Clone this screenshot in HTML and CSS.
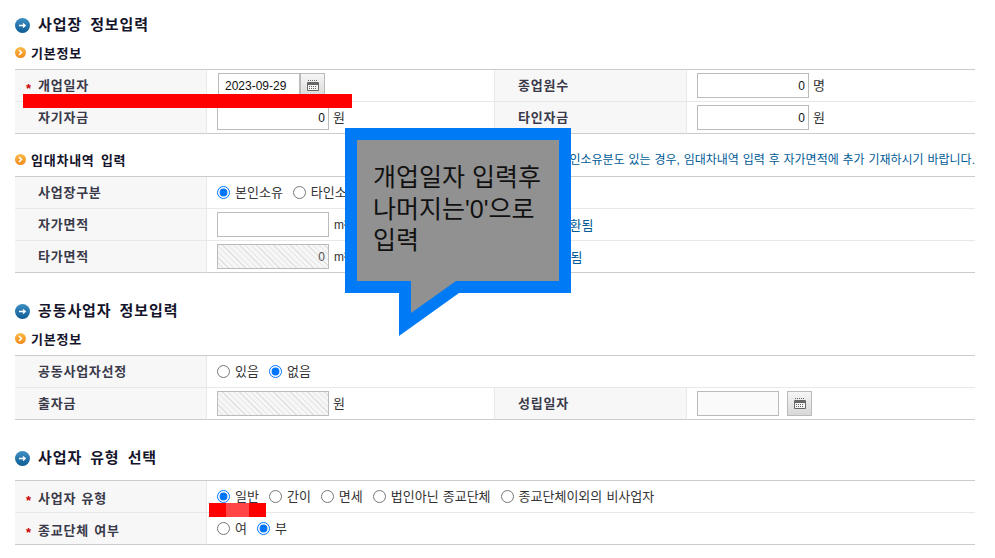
FILE: index.html
```html
<!DOCTYPE html>
<html lang="ko">
<head>
<meta charset="utf-8">
<title>사업장 정보입력</title>
<link rel="stylesheet" href="styles.css">
</head>
<body>
<svg class="defs" width="0" height="0" aria-hidden="true">
  <defs>
    <linearGradient id="gb" x1="0" y1="0" x2="0" y2="1"><stop offset="0" stop-color="#3d8fc4"/><stop offset="1" stop-color="#0f5c95"/></linearGradient>
    <linearGradient id="go" x1="0" y1="0" x2="0" y2="1"><stop offset="0" stop-color="#fdbb4a"/><stop offset="1" stop-color="#f08a1c"/></linearGradient>
    <symbol id="i-title" viewBox="0 0 15 15"><circle cx="7.5" cy="7.5" r="7.5" fill="url(#gb)"/><path d="M4 7.5h6M8 5.5l2.2 2-2.2 2" fill="none" stroke="#fff" stroke-width="1.3"/></symbol>
    <symbol id="i-sub" viewBox="0 0 11 11"><circle cx="5.5" cy="5.5" r="5.5" fill="url(#go)"/><path d="M4 3l2.5 2.5L4 8" fill="none" stroke="#fff" stroke-width="1.5"/></symbol>
    <symbol id="i-cal" viewBox="0 0 12 11"><path d="M1 0.5h10" stroke="#666" stroke-dasharray="1 1" fill="none"/><path d="M0.5 2.5h11v8h-11z" fill="#f4f4f4" stroke="#666"/><path d="M1 3h10v2H1z" fill="#666"/><path d="M2 6.5h8M2 8.5h8" stroke="#666" stroke-dasharray="1 1"/></symbol>
  </defs>
</svg>
<main class="page">
  <h2 class="title"><svg class="ico-title"><use href="#i-title"/></svg>사업장 정보입력</h2>
  <h3 class="sub"><svg class="ico-sub"><use href="#i-sub"/></svg>기본정보</h3>
  <table class="form">
    <colgroup><col class="c1"><col class="c2"><col class="c3"><col class="c4"></colgroup>
    <tr>
      <th><span class="req">*</span>개업일자</th>
      <td><div class="field date"><input class="inp inp-date" type="text" value="2023-09-29"><button class="cal" type="button"><svg class="ico-cal"><use href="#i-cal"/></svg></button></div></td>
      <th class="th2">종업원수</th>
      <td><div class="field"><input class="inp num" type="text" value="0"><span class="unit">명</span></div></td>
    </tr>
    <tr>
      <th>자기자금</th>
      <td><div class="field"><input class="inp num" type="text" value="0"><span class="unit">원</span></div></td>
      <th class="th2">타인자금</th>
      <td><div class="field"><input class="inp num" type="text" value="0"><span class="unit">원</span></div></td>
    </tr>
  </table>

  <div class="sub-row">
    <h3 class="sub"><svg class="ico-sub"><use href="#i-sub"/></svg>임대차내역 입력</h3>
    <p class="notice">타인소유분도 있는 경우, 임대차내역 입력 후 자가면적에 추가 기재하시기 바랍니다.</p>
  </div>
  <table class="form">
    <colgroup><col class="c1"><col class="c2"><col class="c3"><col class="c4"></colgroup>
    <tr>
      <th>사업장구분</th>
      <td colspan="3"><div class="radios">
        <label><input type="radio" name="r1" checked>본인소유</label>
        <label><input type="radio" name="r1">타인소유</label>
      </div></td>
    </tr>
    <tr>
      <th>자가면적</th>
      <td colspan="3"><div class="field"><input class="inp num" type="text"><span class="unit-m">m²</span><span class="hint hint-a">자동 변환됨</span></div></td>
    </tr>
    <tr>
      <th>타가면적</th>
      <td colspan="3"><div class="field"><input class="inp num hatch" type="text" value="0" readonly><span class="unit-m">m²</span><span class="hint hint-b">자동 계산됨</span></div></td>
    </tr>
  </table>

  <h2 class="title t2"><svg class="ico-title"><use href="#i-title"/></svg>공동사업자 정보입력</h2>
  <h3 class="sub"><svg class="ico-sub"><use href="#i-sub"/></svg>기본정보</h3>
  <table class="form">
    <colgroup><col class="c1"><col class="c2"><col class="c3"><col class="c4"></colgroup>
    <tr>
      <th>공동사업자선정</th>
      <td colspan="3"><div class="radios">
        <label><input type="radio" name="r2">있음</label>
        <label><input type="radio" name="r2" checked>없음</label>
      </div></td>
    </tr>
    <tr>
      <th>출자금</th>
      <td><div class="field"><input class="inp num hatch" type="text" readonly><span class="unit">원</span></div></td>
      <th class="th2">성립일자</th>
      <td><div class="field"><input class="inp soft" type="text"><button class="cal cal-sep" type="button"><svg class="ico-cal"><use href="#i-cal"/></svg></button></div></td>
    </tr>
  </table>

  <h2 class="title t3"><svg class="ico-title"><use href="#i-title"/></svg>사업자 유형 선택</h2>
  <table class="form form-low">
    <colgroup><col class="c1"><col class="c2"><col class="c3"><col class="c4"></colgroup>
    <tr>
      <th><span class="req">*</span>사업자 유형</th>
      <td colspan="3"><div class="radios">
        <label><input type="radio" name="r3" checked>일반</label>
        <label><input type="radio" name="r3">간이</label>
        <label><input type="radio" name="r3">면세</label>
        <label><input type="radio" name="r3">법인아닌 종교단체</label>
        <label><input type="radio" name="r3">종교단체이외의 비사업자</label>
      </div></td>
    </tr>
    <tr>
      <th><span class="req">*</span>종교단체 여부</th>
      <td colspan="3"><div class="radios">
        <label><input type="radio" name="r4">여</label>
        <label><input type="radio" name="r4" checked>부</label>
      </div></td>
    </tr>
  </table>
</main>

<div class="redact redact-a"></div>
<div class="redact redact-b"><span class="redact-mid"></span></div>

<aside class="callout">
  <svg class="callout-shape" width="226" height="208" viewBox="0 0 226 208" aria-hidden="true">
    <path d="M0 0H226V165H114L54 208V165H0Z" fill="#007bf5"/>
    <path d="M12 12H214V153H111L66 185V153H12Z" fill="#919191"/>
  </svg>
  <p class="callout-text">개업일자 입력후<br>나머지는'0'으로<br>입력</p>
</aside>
</body>
</html>
```

FILE: styles.css
```css
* { box-sizing: border-box; }
html, body { margin: 0; padding: 0; background: #fff; }
body {
  position: relative;
  height: 558px;
  overflow: hidden;
  font-family: "Liberation Sans", "Noto Sans CJK KR", sans-serif;
  font-size: 12px;
  color: #444;
}
.defs { position: absolute; }
.page { padding: 13px 20px 0 15px; }

.title {
  display: flex;
  align-items: center;
  height: 24px;
  margin: 0 0 8px;
  font-size: 15px;
  font-weight: 700;
  line-height: 24px;
  letter-spacing: .9px;
  word-spacing: 3px;
  color: #14142b;
}
.title.t2 { margin-top: 26px; }
.title.t3 { margin-top: 26px; margin-bottom: 10px; }
.ico-title { width: 15px; height: 15px; margin-right: 8px; flex: none; }

.sub {
  display: flex;
  align-items: center;
  height: 16px;
  margin: 0 0 8px;
  padding-top: 2px;
  font-size: 13px;
  font-weight: 700;
  line-height: 16px;
  letter-spacing: .75px;
  word-spacing: 2px;
  color: #14142b;
}
.ico-sub { width: 11px; height: 11px; margin: -3px 5px 0 0; flex: none; }

.sub-row {
  display: flex;
  justify-content: space-between;
  margin-top: 18px;
}
.notice {
  margin: 0;
  height: 16px;
  font-size: 12px;
  line-height: 16px;
  word-spacing: .5px;
  color: #005b96;
  white-space: nowrap;
}

.form {
  width: 960px;
  table-layout: fixed;
  border-collapse: separate;
  border-spacing: 0;
  border-top: 1px solid #ccc;
}
.c1 { width: 192px; }
.c2 { width: 287px; }
.c3 { width: 193px; }
.c4 { width: 288px; }
.form th, .form td {
  height: 32px;
  padding: 0;
  border-bottom: 1px solid #e8e8e8;
  vertical-align: middle;
}
.form tr:last-child th, .form tr:last-child td { border-bottom-color: #ccc; }
.form th {
  position: relative;
  padding: 0 0 2px 23px;
  background: #f7f7f7;
  border-right: 1px solid #e8e8e8;
  font-size: 13px;
  font-weight: 700;
  letter-spacing: .75px;
  word-spacing: 1px;
  text-align: left;
  color: #3a3a4a;
}
.form th.th2 { border-left: 1px solid #e8e8e8; }
.form td { padding-left: 10px; }
.form-low th { padding: 2px 0 0 23px; }
.req {
  position: absolute;
  left: 11px;
  top: 11px;
  font-size: 13px;
  font-weight: 700;
  color: #c00;
}
.form-low .req { top: 12px; }

.field { display: flex; align-items: center; height: 25px; }
.unit { margin: 0 0 2px 4px; font-size: 13px; color: #333; }
.unit-m { margin-left: 5px; color: #333; }
.date { padding-left: 1px; }
.inp {
  width: 112px;
  height: 25px;
  margin: 0;
  padding: 0 3px;
  border: 1px solid #bbb;
  border-radius: 0;
  background: #fff;
  font: 12px "Liberation Sans", sans-serif;
  color: #111;
  outline: 0;
}
.inp.num { text-align: right; }
.inp-date { width: 82px; padding-left: 6px; }
.inp.soft { width: 82px; background: #fafafa; }
.inp.hatch {
  color: #555;
  background: repeating-linear-gradient(45deg, #f6f6f6 0, #f6f6f6 3px, #e2e2e2 3px, #e2e2e2 4px);
}
.cal {
  display: flex;
  align-items: center;
  justify-content: center;
  width: 25px;
  height: 25px;
  padding: 0;
  border: 1px solid #bbb;
  background: linear-gradient(#f6f6f6, #d8d8d8);
}
.cal-sep { margin-left: 8px; }
.ico-cal { width: 12px; height: 11px; }

.hint { font-size: 13px; color: #005b96; white-space: nowrap; }
.hint-a { margin-left: 182px; }
.hint-b { margin-left: 171px; }

.radios { display: flex; align-items: center; gap: 10px; height: 20px; font-size: 13px; word-spacing: .5px; color: #333; }
.radios label { display: flex; align-items: center; gap: 5px; white-space: nowrap; line-height: 16px; }
.radios input { width: 13px; height: 13px; margin: 0; accent-color: #0075ff; }

.redact { position: absolute; background: #f00; }
.redact-a { left: 23px; top: 94px; width: 329px; height: 14px; }
.redact-b { left: 209px; top: 503px; width: 57px; height: 14px; display: flex; justify-content: center; }
.redact-mid { width: 23px; height: 14px; background: #ff4545; }

.callout { position: absolute; left: 345px; top: 128px; width: 226px; height: 208px; }
.callout-shape { display: block; }
.callout-text {
  position: absolute;
  left: 28px;
  top: 34px;
  margin: 0;
  font-size: 25px;
  line-height: 31.5px;
  color: #111;
  white-space: nowrap;
}
```
